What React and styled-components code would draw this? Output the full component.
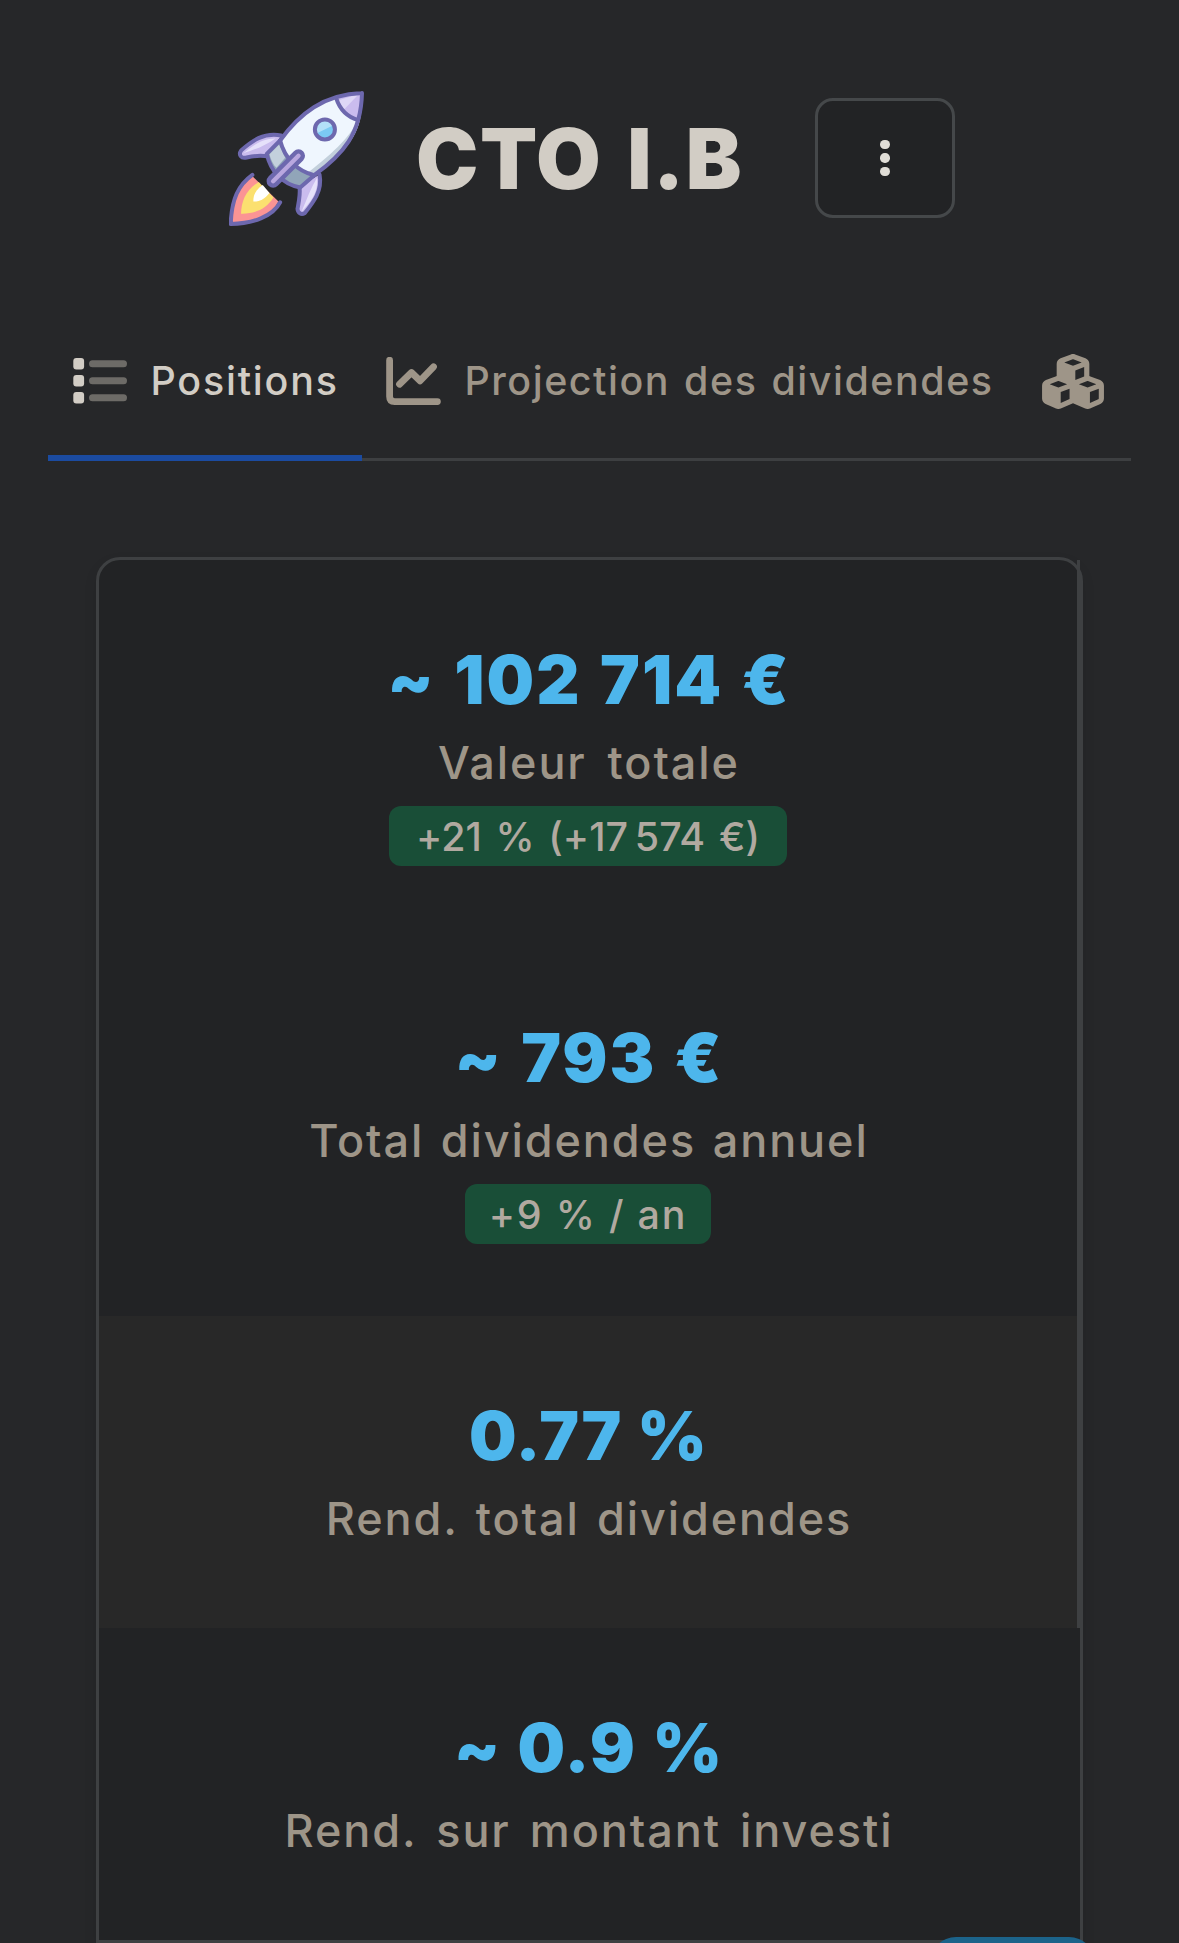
import React from "react";
import styled, { createGlobalStyle, css } from "styled-components";
import { FaCubes } from "react-icons/fa6";

const Global = createGlobalStyle`
  *, *::before, *::after { box-sizing: border-box; }
  html, body { margin: 0; background: #262729; }
  body { font-family: Inter, "Liberation Sans", sans-serif; }
`;

const Page = styled.div`
  position: relative;
  width: 1179px;
  height: 1943px;
  overflow: hidden;
  background: #262729;
`;

const Header = styled.header`
  display: flex;
  align-items: flex-start;
  height: 301px;
  padding: 15px 0 0 229px;
`;

const Rocket = styled.svg`
  flex: none;
  width: 135px;
  height: 135px;
  margin-top: 76px;
`;

const Title = styled.h1`
  flex: none;
  width: 399px;
  margin: 83px 0 0 52px;
  color: #d2cdc5;
  font-size: 83.5px;
  font-weight: 900;
  line-height: 121px;
  letter-spacing: 1.5px;
  word-spacing: 7px;
  white-space: nowrap;
`;

const MenuButton = styled.button`
  display: flex;
  flex-direction: column;
  align-items: center;
  justify-content: center;
  gap: 4px;
  width: 140px;
  height: 120px;
  margin: 83px 0 0;
  padding: 0;
  border: 3px solid #45484a;
  border-radius: 18px;
  background: #222325;
`;

const Dot = styled.span`
  width: 9.4px;
  height: 9.4px;
  border-radius: 50%;
  background: #e0ddd7;
`;

const Tabs = styled.nav`
  display: flex;
  width: 1083px;
  height: 160px;
  margin-left: 48px;
  box-shadow: inset 0 -3px #3d3f41;
`;

const Tab = styled.a`
  display: flex;
  flex: none;
  align-items: center;
  width: ${(p) => p.$width}px;
  padding: 0 24px;
  color: #9e9588;
  font-size: 39.4px;
  font-weight: 500;
  letter-spacing: 1.54px;
  word-spacing: 2px;
  white-space: nowrap;
  ${(p) =>
    p.$active &&
    css`
      color: #d2cdc5;
      letter-spacing: 1.8px;
      box-shadow: inset 0 -6px #1b4ba0;
    `}
`;

const TabIcon = styled.svg`
  flex: none;
  width: 56px;
  height: 48px;
  margin-right: 22.5px;
`;

const CubesIcon = styled(FaCubes)`
  width: 62px;
  height: 55px;
`;

const Card = styled.main`
  display: grid;
  grid-template-rows: 378px 378px 312px 312px;
  width: 987px;
  margin: 96px 0 0 96px;
  border: 3px solid #3e4042;
  border-radius: 24px 24px 0 0;
  background: #222325;
  box-shadow: 0 6px 14px rgba(0, 0, 0, 0.08);
`;

const Stat = styled.section`
  display: flex;
  flex-direction: column;
  align-items: center;
  padding-top: 72px;
  border-right: 3px solid ${(p) => (p.$divided ? "#3e4042" : "transparent")};
  background: ${(p) => (p.$muted ? "#282828" : "transparent")};
`;

const Value = styled.div`
  margin-right: -${(p) => p.$spacing}px;
  color: #4db6ec;
  font-size: 67px;
  font-weight: 900;
  line-height: 96px;
  letter-spacing: ${(p) => p.$spacing}px;
  word-spacing: ${(p) => p.$gap}px;
  white-space: nowrap;
`;

const Label = styled.div`
  margin-right: -1.9px;
  color: #9e9588;
  font-size: 45px;
  font-weight: 500;
  line-height: 70px;
  letter-spacing: 1.9px;
  word-spacing: ${(p) => p.$gap}px;
  white-space: nowrap;
`;

const Badge = styled.div`
  display: flex;
  align-items: center;
  justify-content: center;
  width: ${(p) => p.$width}px;
  height: 60px;
  margin-top: 8px;
  padding-top: 2px;
  border-radius: 12px;
  background: #194e37;
  color: #b1a9a0;
  font-size: 39.4px;
  font-weight: 500;
  letter-spacing: ${(p) => p.$spacing}px;
  word-spacing: ${(p) => p.$gap}px;
  white-space: pre;
`;

const Fab = styled.button`
  position: absolute;
  top: 1937px;
  left: 930px;
  width: 165px;
  height: 144px;
  border: 0;
  border-radius: 26px;
  background: #1c638a;
`;

const stats = [
  {
    value: "~ 102 714 €",
    spacing: 2,
    valueGap: 3.2,
    label: "Valeur totale",
    gap: 7,
    badge: "+21 % (+17\u202f574 €)",
    badgeWidth: 398,
    badgeSpacing: 2.6,
    badgeGap: 3.2,
    divided: true,
  },
  {
    value: "~ 793 €",
    spacing: 2,
    valueGap: 2.8,
    label: "Total dividendes annuel",
    gap: 2.8,
    badge: "+9 % / an",
    badgeWidth: 246,
    badgeSpacing: 1.8,
    badgeGap: 0,
    divided: true,
  },
  {
    value: "0.77 %",
    spacing: 1.1,
    valueGap: 0,
    label: "Rend. total dividendes",
    gap: 3.5,
    divided: true,
    muted: true,
  },
  {
    value: "~ 0.9 %",
    spacing: 1.5,
    valueGap: 1,
    label: "Rend. sur montant investi",
    gap: 5.3,
  },
];

function RocketLogo() {
  return (
    <Rocket viewBox="57 62 404 404" fill="none" strokeLinecap="round" strokeLinejoin="round">
      <path d="M128 318C88 345 66 385 63 459C125 459 185 436 205 393Z" fill="#fb9494" />
      <path d="M146 334C108 358 94 390 93 429C136 430 170 414 190 381Z" fill="#fbe070" />
      <path d="M158 343C136 358 129 374 130 393C150 393 166 383 178 367Z" fill="#fff" />
      <path d="M127 313C85 343 65 385 62 460C127 459 188 438 210 395" stroke="#6d68ae" strokeWidth="12" />
      <path d="M213 195C160 185 125 212 94 239C84 253 93 265 110 261C132 256 152 254 174 258Z" fill="#cabcee" />
      <path d="M196 204C150 204 125 230 100 248C140 236 165 225 196 204Z" fill="#e6e1fa" />
      <path d="M213 195C160 185 125 212 94 239C84 253 93 265 110 261C132 256 152 254 174 258" stroke="#6d68ae" strokeWidth="12" />
      <path d="M328 312C337 360 310 395 284 427C273 434 263 427 262 415L268 348Z" fill="#cabcee" />
      <path d="M320 322C326 365 300 395 274 423C290 385 303 350 320 322Z" fill="#e6e1fa" />
      <path d="M328 312C337 360 310 395 284 427C273 434 263 427 262 415C266 393 271 372 268 350" stroke="#6d68ae" strokeWidth="12" />
      <path d="M210 212L170 250C181 300 215 341 272 351L312 314C256 300 223 258 210 212Z" fill="#91a5b9" />
      <path d="M207 222L178 251C183 270 190 283 199 292L225 262Z" fill="#c3d0dc" />
      <path d="M455 68C340 72 268 130 210 210C223 260 260 303 312 314C398 252 452 190 455 68Z" fill="#eff6fe" />
      <path d="M440 148C428 190 375 243 292 307L312 314C398 252 447 200 453 122Z" fill="#c3d0dc" />
      <path d="M378 84C388 115 410 139 443 149C451 125 454 98 455 68C428 69 402 74 378 84Z" fill="#cabcee" />
      <path d="M384 90L445 72L397 122C390 113 386 102 384 90Z" fill="#ded7f6" />
      <path d="M378 84C388 115 410 139 443 149M210 210C223 260 260 303 312 314" stroke="#6d68ae" strokeWidth="12" />
      <path d="M210 210L170 250C181 300 215 341 270 351L312 314" stroke="#6d68ae" strokeWidth="12" />
      <path d="M455 68C340 72 268 130 210 210M312 314C398 252 452 190 455 68" stroke="#6d68ae" strokeWidth="12" />
      <circle cx="344" cy="177" r="30" fill="#7bcaf3" />
      <path d="M317 190A30 30 0 0 1 371 164Z" fill="#b3e0f8" />
      <circle cx="344" cy="177" r="30" stroke="#6d68ae" strokeWidth="12" />
      <path d="M265 256L189 332" stroke="#6d68ae" strokeWidth="39" />
      <path d="M265 256L189 332" stroke="#b9a7df" strokeWidth="13" />
    </Rocket>
  );
}

function ListIcon() {
  return (
    <TabIcon viewBox="0 0 56 48">
      {[0, 17, 34].map((y) => (
        <g key={y}>
          <rect x="1.3" y={y + 1} width="10.8" height="11.6" rx="3" fill="#d2cdc5" />
          <rect x="17" y={y + 3.3} width="38" height="7" rx="3.5" fill="#6d6b67" />
        </g>
      ))}
    </TabIcon>
  );
}

function ChartIcon() {
  return (
    <TabIcon
      viewBox="0 0 56 48"
      fill="none"
      stroke="#9e9588"
      strokeWidth="6.8"
      strokeLinecap="round"
      strokeLinejoin="round"
    >
      <path d="M3.6 3.2V39.5Q3.6 44.6 8.7 44.6H51.4" />
      <path d="M13.5 27.2L25.5 15.5L34 23.8L47.5 9.8" />
    </TabIcon>
  );
}

export default function App() {
  return (
    <Page>
      <Global />
      <Header>
        <RocketLogo />
        <Title>CTO I.B</Title>
        <MenuButton aria-label="Menu">
          <Dot />
          <Dot />
          <Dot />
        </MenuButton>
      </Header>
      <Tabs>
        <Tab $width={314} $active>
          <ListIcon />
          Positions
        </Tab>
        <Tab $width={656}>
          <ChartIcon />
          Projection des dividendes
        </Tab>
        <Tab $width={113}>
          <CubesIcon />
        </Tab>
      </Tabs>
      <Card>
        {stats.map((s) => (
          <Stat key={s.label} $divided={s.divided} $muted={s.muted}>
            <Value $spacing={s.spacing} $gap={s.valueGap}>
              {s.value}
            </Value>
            <Label $gap={s.gap}>{s.label}</Label>
            {s.badge && (
              <Badge $width={s.badgeWidth} $spacing={s.badgeSpacing} $gap={s.badgeGap}>
                {s.badge}
              </Badge>
            )}
          </Stat>
        ))}
      </Card>
      <Fab aria-label="Ajouter" />
    </Page>
  );
}
